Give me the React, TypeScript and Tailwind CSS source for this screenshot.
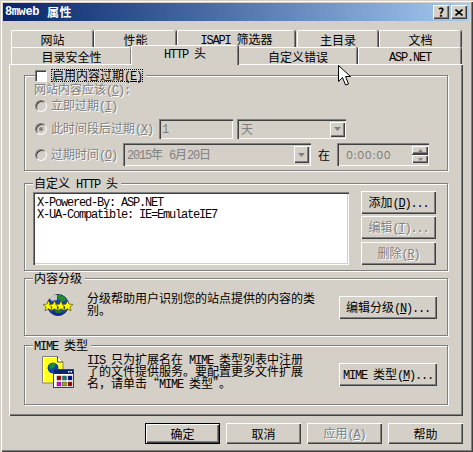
const raised =
  "shadow-[inset_1px_1px_0_#fff,inset_-1px_-1px_0_#404040,inset_-2px_-2px_0_#808080]";
const sunken =
  "shadow-[inset_1px_1px_0_#808080,inset_2px_2px_0_#404040,inset_-1px_-1px_0_#fff,inset_-2px_-2px_0_#d4d0c8]";
const disabledText = "text-[#808080] [text-shadow:1px_1px_0_#fff]";

// "&E" marks the underlined mnemonic, ascii runs get the 6px wide latin face
function Label({ text }: { text: string }) {
  const parts = text.split(/(&.|[ -%'-~]+)/).filter(Boolean);
  return (
    <span className="whitespace-pre">
      {parts.map((part, i) => {
        if (part[0] === "&") {
          return (
            <span key={i} className="font-['Liberation_Mono'] tracking-[-1.2px] underline">
              {part[1]}
            </span>
          );
        }
        if (/^[ -~]+$/.test(part)) {
          return (
            <span key={i} className="font-['Liberation_Mono'] tracking-[-1.2px]">
              {part}
            </span>
          );
        }
        return <span key={i}>{part}</span>;
      })}
    </span>
  );
}

function Tab({ text, width, active }: { text: string; width: string; active?: boolean }) {
  return (
    <div
      className={`flex items-center justify-center rounded-t-[2px] bg-[#d4d0c8] border-t border-l border-white shadow-[inset_-1px_0_0_#808080,1px_0_0_#404040] ${width} ${
        active ? "relative z-10 h-[20px] -mt-[2px] pb-[3px]" : "h-[17px] pt-[1px]"
      }`}
    >
      <Label text={text} />
    </div>
  );
}

function Group({
  legend,
  className,
  children,
}: {
  legend?: string;
  className: string;
  children: React.ReactNode;
}) {
  return (
    <div
      className={`relative border border-[#808080] shadow-[1px_1px_0_#fff,inset_1px_1px_0_#fff] ${className}`}
    >
      {legend && (
        <div className="absolute -top-[7px] left-[8px] bg-[#d4d0c8] px-[1px] pr-[3px]">
          <Label text={legend} />
        </div>
      )}
      {children}
    </div>
  );
}

function Btn({
  text,
  className,
  disabled,
  isDefault,
}: {
  text: string;
  className: string;
  disabled?: boolean;
  isDefault?: boolean;
}) {
  return (
    <button
      disabled={disabled}
      className={`flex items-center justify-center bg-[#d4d0c8] ${raised} ${
        isDefault ? "border border-black" : ""
      } ${disabled ? disabledText : ""} ${className}`}
    >
      <Label text={text} />
    </button>
  );
}

function Radio({ checked }: { checked?: boolean }) {
  return (
    <div className="flex items-center justify-center w-3 h-3 rounded-full border border-t-[#808080] border-l-[#808080] border-r-white border-b-white shadow-[inset_1px_1px_0_#404040]">
      {checked && <div className="w-1 h-1 rounded-full bg-[#808080]" />}
    </div>
  );
}

function Arrow({ className }: { className: string }) {
  return (
    <div className={`flex items-center justify-center bg-[#d4d0c8] ${raised} ${className}`}>
      <svg width="7" height="4" viewBox="0 0 7 4">
        <path d="M0 0H7L3.5 4Z" fill="#808080" />
      </svg>
    </div>
  );
}

function RatingIcon() {
  const star = "M0 -5.5L1.6 -1.8L5.5 -1.6L2.5 0.9L3.5 4.8L0 2.7L-3.5 4.8L-2.5 0.9L-5.5 -1.6L-1.6 -1.8Z";
  return (
    <svg width="32" height="25" viewBox="0 0 32 25" className="shrink-0">
      <circle cx="16" cy="12" r="10.5" fill="#1a3fb0" stroke="#10206a" />
      <path d="M7 5C10 1 13 1 15 2L15 7L10 8Z" fill="#c8c8c8" />
      <path d="M15 2C19 1 23 4 25 7L20 9L16 6Z" fill="#1f8a3a" />
      <path d="M10 19C13 17 18 17 21 20C17 23 13 22 10 19Z" fill="#0a2a9a" />
      <path d="M12 16H20L19 20H14Z" fill="#1f7a30" />
      {[6.5, 12.5, 19, 25.5].map((x) => (
        <path
          key={x}
          transform={`translate(${x} 13)`}
          d={star}
          fill="#ffff00"
          stroke="#404000"
          strokeWidth="0.6"
        />
      ))}
    </svg>
  );
}

function MimeIcon() {
  const colors = ["#a00000", "#008080", "#0000a0", "#e000e0", "#a0a000", "#a00000"];
  return (
    <svg width="32" height="32" viewBox="0 0 32 32" className="shrink-0">
      <defs>
        <pattern id="dots" width="2" height="2" patternUnits="userSpaceOnUse">
          <rect width="2" height="2" fill="#fff" />
          <rect width="1" height="1" fill="#ffff00" />
        </pattern>
      </defs>
      <path d="M0.5 0.5H15.5L21 6V27H0.5Z" fill="url(#dots)" stroke="#808080" />
      <path d="M15.5 0.5V6H21" fill="#fff" stroke="#404040" />
      <circle cx="11" cy="12" r="5.5" fill="#1040b0" />
      <path d="M7 9C9 7 12 6 14 8L12 12L8 13Z" fill="#1f8a3a" />
      <rect x="11.5" y="13.5" width="20" height="18" fill="#fff" stroke="#404040" />
      <rect x="12" y="14" width="19" height="4" fill="#0a246a" />
      <rect x="26" y="15" width="1.5" height="1.5" fill="#fff" />
      <rect x="28.5" y="15" width="1.5" height="1.5" fill="#fff" />
      {colors.map((c, i) => (
        <rect
          key={i}
          x={15 + (i % 3) * 5.5}
          y={20 + Math.floor(i / 3) * 6}
          width="4"
          height="4"
          fill={c}
          stroke="#404040"
          strokeWidth="0.5"
        />
      ))}
    </svg>
  );
}

export default function App() {
  return (
    <div
      lang="zh-CN"
      className="relative flex flex-col w-[473px] h-[452px] overflow-hidden p-[3px] bg-[#d4d0c8] text-black text-[12px] leading-[12px] font-['Noto_Sans_CJK_SC',sans-serif] shadow-[inset_1px_1px_0_#d4d0c8,inset_2px_2px_0_#fff,inset_-1px_-1px_0_#404040,inset_-2px_-2px_0_#808080]"
    >
      <div className="flex items-center h-[18px] w-[466px] pl-[2px] pr-[2px] bg-linear-to-r from-[#0a246a] to-[#a6caf0] text-white font-bold">
        <span className="font-['Liberation_Mono'] tracking-[-0.4px]">8mweb</span>
        <span className="ml-[8px] tracking-[0.5px]">属性</span>
        <div className={`flex items-center justify-center ml-auto w-4 h-[14px] bg-[#d4d0c8] text-black ${raised}`}>
          ?
        </div>
        <div className={`flex items-center justify-center ml-[2px] w-4 h-[14px] bg-[#d4d0c8] ${raised}`}>
          <svg width="8" height="7" viewBox="0 0 8 7">
            <path d="M0.5 0.5L7.5 6.5M7.5 0.5L0.5 6.5" stroke="#000" strokeWidth="1.6" />
          </svg>
        </div>
      </div>

      <div className="flex h-[17px] ml-[8px] mt-[9px]">
        <Tab text="网站" width="w-[82px]" />
        <div className="w-[1px]" />
        <Tab text="性能" width="w-[82px]" />
        <div className="w-[1px]" />
        <Tab text="ISAPI 筛选器" width="w-[118px]" />
        <div className="w-[2px]" />
        <Tab text="主目录" width="w-[81px]" />
        <div className="w-[1px]" />
        <Tab text="文档" width="w-[82px]" />
      </div>
      <div className="flex h-[17px] ml-[8px]">
        <Tab text="目录安全性" width="w-[120px]" />
        <Tab text="HTTP 头" width="w-[107px]" active />
        <Tab text="自定义错误" width="w-[119px]" />
        <div className="w-[1px]" />
        <Tab text="ASP.NET" width="w-[103px]" />
      </div>

      <div
        className={`flex flex-col w-[454px] h-[352px] ml-[6px] pt-[11px] pl-[15px] ${raised}`}
      >
        <Group className="w-[424px] h-[96px] pl-[10px] shrink-0">
          <div className="absolute -top-[7px] left-[10px] flex items-center bg-[#d4d0c8] pr-[3px]">
            <div className="w-3 h-3 bg-white border border-t-[#808080] border-l-[#808080] border-r-white border-b-white shadow-[inset_1px_1px_0_#404040]" />
            <div className="ml-[4px] px-[1px] h-[13px] flex items-center outline-1 outline-dotted outline-black -outline-offset-1">
              <Label text="启用内容过期(&E)" />
            </div>
          </div>
          <div className={`-ml-[1px] mt-[7px] h-3 ${disabledText}`}>
            <Label text="网站内容应该(&C):" />
          </div>
          <div className={`flex items-center gap-[4px] mt-[5px] h-3 ${disabledText}`}>
            <Radio />
            <Label text="立即过期(&I)" />
          </div>
          <div className="flex items-center mt-[7px] h-[20px]">
            <Radio checked />
            <div className={`ml-[4px] w-[108px] ${disabledText}`}>
              <Label text="此时间段后过期(&X)" />
            </div>
            <div className={`flex items-center w-[74px] h-[20px] pl-[3px] text-[#808080] ${sunken}`}>
              <Label text="1" />
            </div>
            <div className={`flex items-center justify-between w-[109px] h-[20px] ml-[4px] pl-[4px] pr-[1px] text-[#808080] ${sunken}`}>
              <span>天</span>
              <Arrow className="w-[15px] h-[15px]" />
            </div>
          </div>
          <div className="flex items-center mt-[4px] h-[23px]">
            <Radio />
            <div className={`ml-[4px] w-[72px] ${disabledText}`}>
              <Label text="过期时间(&O)" />
            </div>
            <div className={`flex items-center justify-between w-[188px] h-[23px] pl-[4px] pr-[2px] text-[#808080] ${sunken}`}>
              <Label text="2015年 6月20日" />
              <Arrow className="w-[15px] h-[17px]" />
            </div>
            <div className="w-[12px] ml-[7px]">在</div>
            <div className={`flex items-center justify-between w-[92px] h-[23px] ml-[7px] pl-[9px] pr-[1px] text-[#808080] ${sunken}`}>
              <span className="font-['Inter'] text-[11px] tracking-[0.6px]">0:00:00</span>
              <div className="flex flex-col">
                <div className={`flex items-center justify-center w-4 h-2 bg-[#d4d0c8] ${raised}`}>
                  <svg width="5" height="3" viewBox="0 0 5 3">
                    <path d="M0 3H5L2.5 0Z" fill="#808080" />
                  </svg>
                </div>
                <div className="h-[1px] bg-[#404040]" />
                <div className={`flex items-center justify-center w-4 h-2 bg-[#d4d0c8] ${raised}`}>
                  <svg width="5" height="3" viewBox="0 0 5 3">
                    <path d="M0 0H5L2.5 3Z" fill="#808080" />
                  </svg>
                </div>
              </div>
            </div>
          </div>
        </Group>

        <Group legend="自定义 HTTP 头" className="flex w-[424px] h-[88px] mt-[12px] pl-[8px] pt-[8px] shrink-0">
          <div className={`w-[316px] h-[73px] pl-[4px] pt-[3px] bg-white ${sunken}`}>
            <div className="h-3">
              <Label text="X-Powered-By: ASP.NET" />
            </div>
            <div className="h-3">
              <Label text="X-UA-Compatible: IE=EmulateIE7" />
            </div>
          </div>
          <div className="flex flex-col ml-[12px] -mt-[1px]">
            <Btn text="添加(&D)..." className="w-[75px] h-[23px]" />
            <Btn text="编辑(&T)..." className="w-[75px] h-[23px] mt-[2px]" disabled />
            <Btn text="删除(&R)" className="w-[75px] h-[23px] mt-[3px]" disabled />
          </div>
        </Group>

        <Group legend="内容分级" className="flex w-[424px] h-[58px] mt-[7px] pl-[17px] pt-[13px] shrink-0">
          <div className="mt-[1px]">
            <RatingIcon />
          </div>
          <div className="w-[240px] ml-[13px]">
            <div className="h-3">分级帮助用户识别您的站点提供的内容的类</div>
            <div className="h-3">别。</div>
          </div>
          <Btn text="编辑分级(&N)..." className="w-[98px] h-[23px] ml-[12px] mt-[4px]" />
        </Group>

        <Group legend="MIME 类型" className="flex w-[424px] h-[60px] mt-[9px] pl-[17px] pt-[7px] shrink-0">
          <div className="mt-[3px]">
            <MimeIcon />
          </div>
          <div className="w-[240px] ml-[13px]">
            <div className="h-3 whitespace-nowrap">
              <Label text="IIS 只为扩展名在 MIME 类型列表中注册" />
            </div>
            <div className="h-3 whitespace-nowrap">了的文件提供服务。要配置更多文件扩展</div>
            <div className="h-3 whitespace-nowrap">
              <Label text="名，请单击“MIME 类型”。" />
            </div>
          </div>
          <Btn text="MIME 类型(&M)..." className="w-[98px] h-[23px] ml-[12px] mt-[10px]" />
        </Group>
      </div>

      <div className="flex w-[460px] mt-[7px] justify-end gap-[6px]">
        <Btn text="确定" className="w-[75px] h-[21px]" isDefault />
        <Btn text="取消" className="w-[75px] h-[21px]" />
        <Btn text="应用(&A)" className="w-[75px] h-[21px]" disabled />
        <Btn text="帮助" className="w-[75px] h-[21px]" />
      </div>

      <svg width="14" height="22" viewBox="0 0 14 22" className="absolute left-[338px] top-[65px]">
        <path d="M0.5 0.5V16.5L4.5 12.5L7.5 20L10.5 19L7.5 11.5H12.5Z" fill="#fff" stroke="#000" />
      </svg>
    </div>
  );
}
